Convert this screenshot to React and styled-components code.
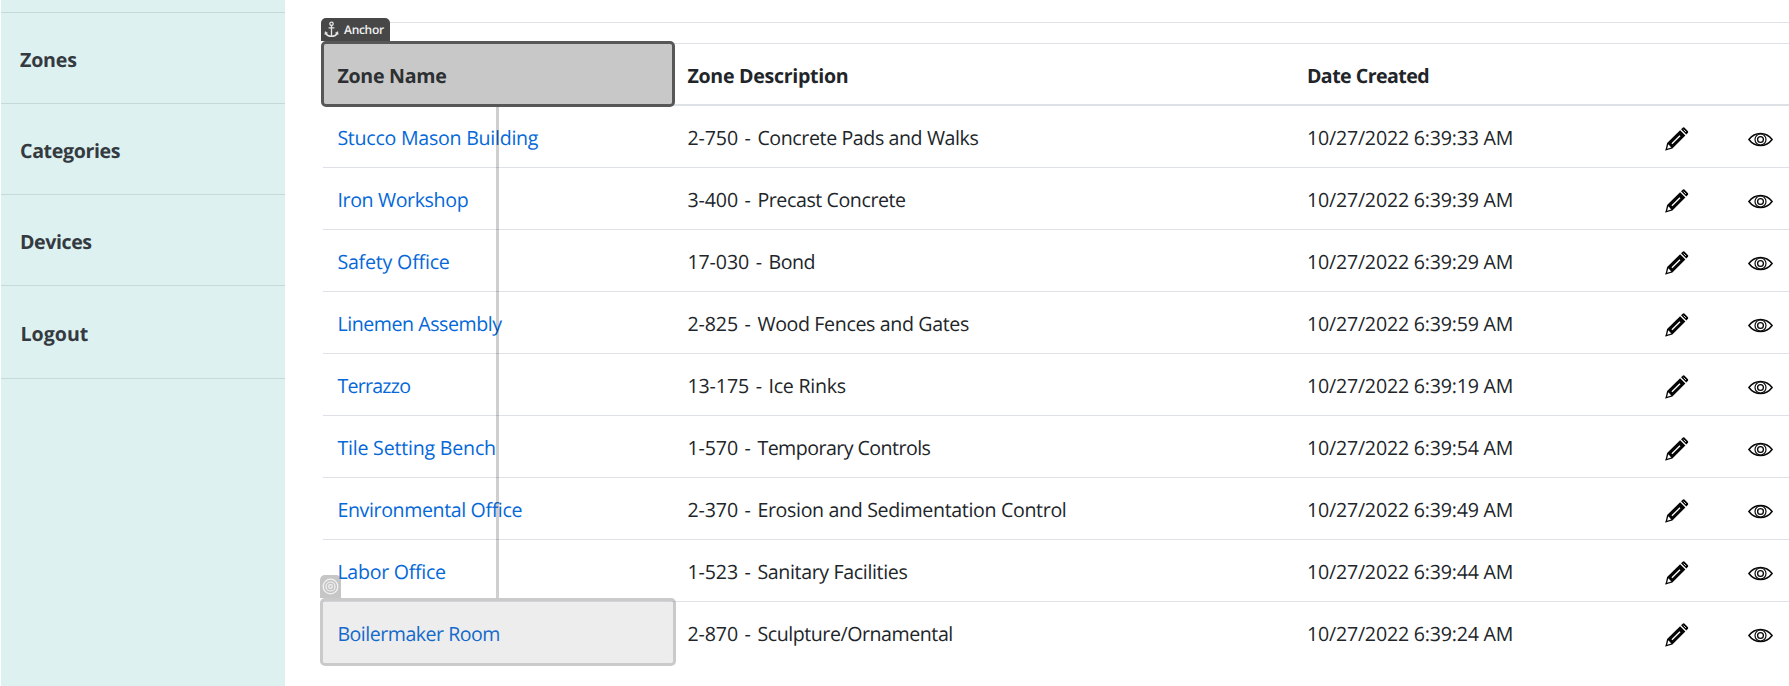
import React from 'react';
import styled, { createGlobalStyle } from 'styled-components';

const GlobalStyle = createGlobalStyle`
  * { box-sizing: border-box; }
  body {
    margin: 0;
    background: #fff;
    color: #212529;
    font-family: "Segoe UI", "Open Sans", sans-serif;
    font-size: 19.6px;
    line-height: 30px;
    text-rendering: geometricPrecision;
    overflow: hidden;
  }
`;

const Page = styled.div`
  display: flex;
  height: 686px;
  overflow: hidden;
`;

const Sidebar = styled.nav`
  width: 284px;
  margin-left: 1px;
  flex: none;
  background: #ddf1f0;
`;

const SidebarTop = styled.div`
  height: 13px;
  border-bottom: 1px solid #c6d9d8;
`;

const SidebarLink = styled.a`
  display: flex;
  align-items: center;
  height: ${(p) => p.$height}px;
  padding: 3px 0 0 ${(p) => p.$indent || 19}px;
  border-bottom: 1px solid #c6d9d8;
  color: #343a40;
  font-weight: 700;
  letter-spacing: ${(p) => p.$tracking}px;
`;

const Main = styled.main`
  flex: 1;
  min-width: 0;
  padding: 22px 0 0 38px;
`;

const Toolbar = styled.div`
  height: 22px;
  border-top: 1px solid #dee2e6;
  border-bottom: 1px solid #dee2e6;
`;

const Row = styled.div`
  display: grid;
  grid-template-columns: 350px 619.5px 358.5px 83px 1fr;
  height: 62px;
  border-bottom: 1px solid #dee2e6;
  &:last-child { border-bottom: 1px solid transparent; }
`;

const HeaderRow = styled(Row)`
  font-weight: 700;
  border-bottom: 2px solid #dee2e6;
`;

const Cell = styled.div`
  position: relative;
  display: flex;
  align-items: center;
  padding: 2px 0 0 14.4px;
  white-space: pre;
  letter-spacing: ${(p) => p.$tracking || 0}px;
`;

const HeaderCell = styled(Cell)`
  padding-top: 3px;
`;

const ZoneLink = styled.a`
  color: #0568d8;
`;

const Code = styled.span`
  letter-spacing: -0.1px;
  word-spacing: 1.6px;
`;

const IconCell = styled.div`
  display: flex;
  align-items: center;
  padding: 5px 0 0 14px;
`;

const Highlight = styled.div`
  position: absolute;
  z-index: 2;
  border-radius: 5px;
  background-clip: padding-box;
`;

const AnchorHighlight = styled(Highlight)`
  inset: -3px -2px -3px -2px;
  border: 3px solid #575757;
  background-color: rgba(74, 74, 74, 0.3);
`;

const TargetHighlight = styled(Highlight)`
  inset: -4px -3px -3px -3px;
  border: 3px solid rgba(150, 150, 150, 0.5);
  background-color: rgba(120, 120, 120, 0.135);
`;

const Tag = styled.div`
  position: absolute;
  display: flex;
  align-items: center;
  z-index: 2;
  border-radius: 5px 5px 0 0;
  color: #f1f1f1;
`;

const AnchorTag = styled(Tag)`
  left: -2px;
  top: -26px;
  width: 69px;
  height: 23px;
  padding-left: 3px;
  gap: 5px;
  background: #474747;
  font-size: 12px;
  font-weight: 600;
  line-height: 16px;
  letter-spacing: -0.3px;
`;

const TargetTag = styled(Tag)`
  left: -3px;
  top: -27px;
  width: 21px;
  height: 23px;
  justify-content: center;
  background: rgba(120, 120, 120, 0.42);
`;

const Connector = styled.div`
  position: absolute;
  z-index: 1;
  left: 173px;
  top: 63px;
  width: 3px;
  height: 491px;
  background: rgba(0, 0, 0, 0.19);
`;

const PencilIcon = () => (
  <svg width="24" height="24" viewBox="0 0 24 24">
    <path d="M0.4 23.4 2.1 16.1 15.1 3.2 20.4 8.5 7.4 21.4Z" fill="#050505" />
    <path d="M2.1 21.7 3.3 17.3 6.3 20.4Z" fill="#fff" />
    <path d="M0.4 23.4 1.2 20.9 2.9 22.6Z" fill="#050505" />
    <path d="M6.9 16.8 15 8.8" stroke="#fff" strokeWidth="1.3" fill="none" />
    <path d="M16 2.3 18 .4Q18.7 0 19.4.6L23 4.3Q23.5 5 23 5.7L21.3 7.6Z" fill="#050505" />
    <path d="M18.6 2.6 21 5" stroke="#fff" strokeWidth=".8" fill="none" />
  </svg>
);

const EyeIcon = () => (
  <svg width="25" height="15" viewBox="0 0 25 15" fill="none" stroke="#080808">
    <path d="M.9 7.5C7 -.6 18 -.6 24.1 7.5 18 15.6 7 15.6.9 7.5Z" strokeWidth="1.5" />
    <circle cx="12.5" cy="7.5" r="5.5" strokeWidth="1.2" />
    <circle cx="12.5" cy="7.5" r="2.9" strokeWidth="1.3" />
  </svg>
);

const AnchorIcon = () => (
  <svg width="15" height="17" viewBox="0 0 15 17" fill="none" stroke="#e6e6e6" strokeWidth="1.3">
    <circle cx="7.5" cy="2.8" r="1.7" />
    <path d="M7.5 4.5V15M4.6 6.9H10.4" />
    <path d="M1.4 12C2.8 14.5 5 15.3 7.5 15.3S12.2 14.5 13.6 12" strokeWidth="1.6" />
    <path d="M.8 13.4 1.2 10.6 3.6 12ZM14.2 13.4 13.8 10.6 11.4 12Z" fill="#e6e6e6" strokeWidth=".5" />
  </svg>
);

const TargetIcon = () => (
  <svg width="17" height="17" viewBox="0 0 17 17" fill="none" stroke="#f4f4f4" strokeWidth="1.2">
    <circle cx="8.5" cy="8.5" r="7.3" />
    <circle cx="8.5" cy="8.5" r="4.5" />
    <circle cx="8.5" cy="8.5" r="1.8" />
  </svg>
);

const links = [
  { label: 'Zones', height: 91, tracking: -0.2 },
  { label: 'Categories', height: 91, tracking: -0.36 },
  { label: 'Devices', height: 91, tracking: -0.42 },
  { label: 'Logout', height: 93, tracking: 0, indent: 19.5 },
];

const zones = [
  ['Stucco Mason Building', -0.26, '2-750 - ', 'Concrete Pads and Walks', -0.4, '6:39:33'],
  ['Iron Workshop', -0.37, '3-400 - ', 'Precast Concrete', -0.42, '6:39:39'],
  ['Safety Office', -0.2, '17-030 - ', 'Bond', -0.5, '6:39:29'],
  ['Linemen Assembly', -0.45, '2-825 - ', 'Wood Fences and Gates', -0.36, '6:39:59'],
  ['Terrazzo', -0.75, '13-175 - ', 'Ice Rinks', -0.26, '6:39:19'],
  ['Tile Setting Bench', -0.21, '1-570 - ', 'Temporary Controls', -0.54, '6:39:54'],
  ['Environmental Office', -0.38, '2-370 - ', 'Erosion and Sedimentation Control', -0.34, '6:39:49'],
  ['Labor Office', -0.28, '1-523 - ', 'Sanitary Facilities', -0.36, '6:39:44'],
  ['Boilermaker Room', -0.5, '2-870 - ', 'Sculpture/Ornamental', -0.45, '6:39:24'],
];

export default function App() {
  return (
    <>
      <GlobalStyle />
      <Page>
        <Sidebar>
          <SidebarTop />
          {links.map((l) => (
            <SidebarLink key={l.label} $height={l.height} $tracking={l.tracking} $indent={l.indent}>
              {l.label}
            </SidebarLink>
          ))}
        </Sidebar>
        <Main>
          <Toolbar />
          <HeaderRow>
            <HeaderCell $tracking={-0.27}>
              Zone Name
              <AnchorTag><AnchorIcon />Anchor</AnchorTag>
              <AnchorHighlight />
              <Connector />
            </HeaderCell>
            <HeaderCell $tracking={-0.29}>Zone Description</HeaderCell>
            <HeaderCell $tracking={-0.54}>Date Created</HeaderCell>
          </HeaderRow>
          {zones.map(([name, nameTracking, code, description, descriptionTracking, time], i) => (
            <Row key={name}>
              <Cell $tracking={nameTracking}>
                <ZoneLink>{name}</ZoneLink>
                {i === zones.length - 1 && (
                  <>
                    <TargetTag><TargetIcon /></TargetTag>
                    <TargetHighlight />
                  </>
                )}
              </Cell>
              <Cell $tracking={descriptionTracking}><Code>{code}</Code>{description}</Cell>
              <Cell $tracking={-0.2}>10/27/2022 {time} AM</Cell>
              <IconCell><PencilIcon /></IconCell>
              <IconCell><EyeIcon /></IconCell>
            </Row>
          ))}
        </Main>
      </Page>
    </>
  );
}
